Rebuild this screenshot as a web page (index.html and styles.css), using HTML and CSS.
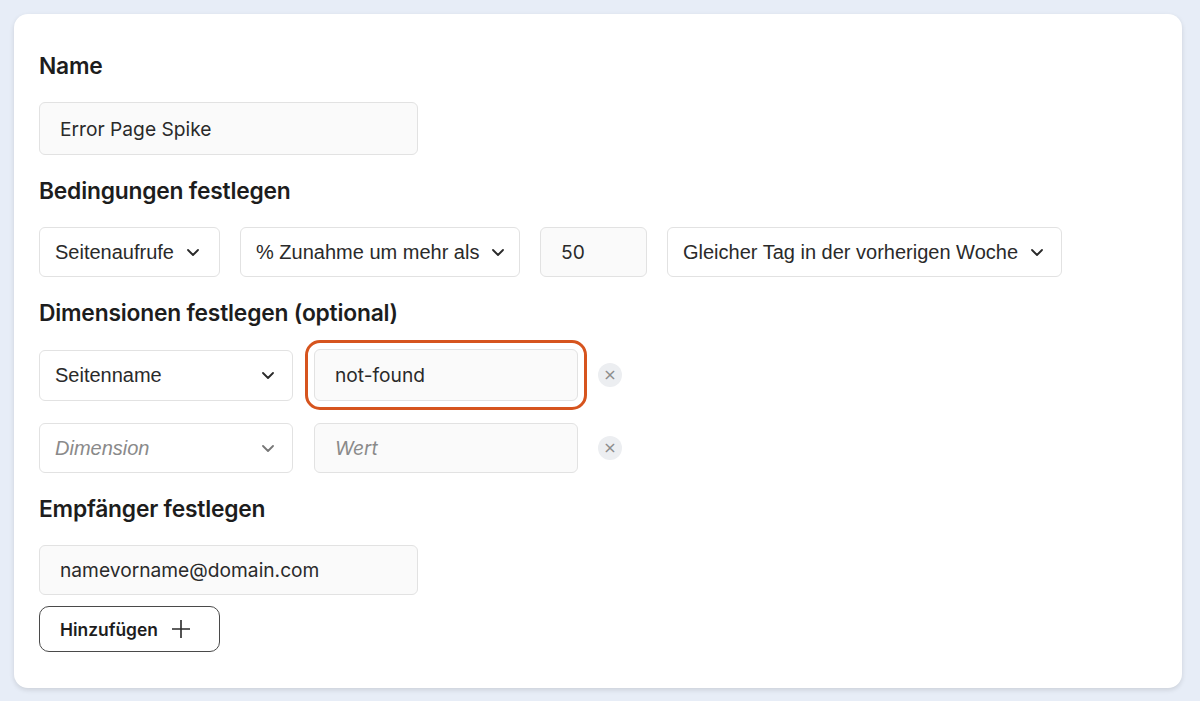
FILE: index.html
```html
<!DOCTYPE html>
<html>
<head>
  <meta charset="utf-8"/>
  <title>Alarm bearbeiten</title>
  <link rel="stylesheet" href="styles.css">
</head>
<body>
  <div class="card">
    <div class="section">
      <h2>Name</h2>
      <div class="field wide tall">Error Page Spike</div>
    </div>

    <div class="section">
      <h2>Bedingungen festlegen</h2>
      <div class="row">
        <div class="select w-metric">Seitenaufrufe <svg class="chev" viewBox="0 0 12 7"><path d="M1 1 L6 6 L11 1"/></svg></div>
        <div class="select w-op">% Zunahme um mehr als <svg class="chev" viewBox="0 0 12 7"><path d="M1 1 L6 6 L11 1"/></svg></div>
        <div class="field w-num">50</div>
        <div class="select w-period">Gleicher Tag in der vorherigen Woche <svg class="chev" viewBox="0 0 12 7"><path d="M1 1 L6 6 L11 1"/></svg></div>
      </div>
    </div>

    <div class="section">
      <h2>Dimensionen festlegen (optional)</h2>
      <div class="dims">
        <div class="row dim-row">
          <div class="select spread w-dim">Seitenname <svg class="chev" viewBox="0 0 12 7"><path d="M1 1 L6 6 L11 1"/></svg></div>
          <div class="field w-val active">not-found</div>
          <button class="remove">&times;</button>
        </div>
        <div class="row dim-row">
          <div class="select spread w-dim short placeholder">Dimension <svg class="chev" viewBox="0 0 12 7"><path d="M1 1 L6 6 L11 1"/></svg></div>
          <div class="field w-val short placeholder">Wert</div>
          <button class="remove">&times;</button>
        </div>
      </div>
    </div>

    <div class="section">
      <h2>Empfänger festlegen</h2>
      <div class="recipients">
        <div class="field wide">namevorname@domain.com</div>
        <button class="add">Hinzufügen <svg class="plus" viewBox="0 0 18 18"><path d="M9 0 V18 M0 9 H18"/></svg></button>
      </div>
    </div>
  </div>
</body>
</html>
```

FILE: styles.css
```css
body {
  margin: 0;
  background-color: #e7edf7;
  font-family: Inter, "Liberation Sans", sans-serif;
  color: #222;
}

.card {
  margin: 14px 18px 14px 14px;
  height: 674px;
  box-sizing: border-box;
  padding: 38px 25px;
  background-color: #fff;
  border-radius: 14px;
  box-shadow: 0 2px 5px rgba(0,0,0,0.12);
  display: flex;
  flex-direction: column;
  gap: 22px;
}

.section {
  display: flex;
  flex-direction: column;
  gap: 22px;
}

h2 {
  margin: 0;
  font-size: 22.8px;
  line-height: 28px;
  font-weight: 600;
  color: #1d1d1d;
  letter-spacing: -0.2px;
}

.row {
  display: flex;
  align-items: center;
  gap: 20px;
}

.field, .select {
  box-sizing: border-box;
  height: 50px;
  display: flex;
  align-items: center;
  border: 1px solid #e2e2e2;
  border-radius: 6px;
  color: #2a2a2a;
  white-space: nowrap;
  flex-shrink: 0;
}

.field {
  background-color: #fafafa;
  padding: 0 20px;
  font-size: 19.2px;
}

.select {
  background-color: #fff;
  padding: 0 15px;
  font-family: "Liberation Sans", Arial, sans-serif;
  font-size: 20px;
  gap: 13px;
}

.select.spread {
  justify-content: space-between;
  padding-right: 18px;
}

.chev {
  width: 12px;
  height: 7px;
  fill: none;
  stroke: #2a2a2a;
  stroke-width: 1.8;
  stroke-linecap: round;
  stroke-linejoin: round;
  flex-shrink: 0;
}

.wide { width: 379px; }
.tall { height: 53px; }
.w-metric { width: 181px; }
.w-op { width: 280px; }
.w-num { width: 107px; }
.w-period { width: 395px; }
.w-dim { width: 254px; height: 51px; }
.w-val { width: 264px; height: 52px; }
.short { height: 50px; }

.dims {
  display: flex;
  flex-direction: column;
  gap: 22px;
}

.dim-row { gap: 21px; }

.active {
  outline: 3px solid #d6541e;
  outline-offset: 6px;
}

.placeholder {
  font-style: italic;
  color: #8a8a8a;
}

.placeholder .chev {
  stroke: #777;
}

.remove {
  width: 24px;
  height: 24px;
  padding: 0;
  margin-left: -1px;
  border: none;
  border-radius: 50%;
  background-color: #eceef1;
  color: #8c8c8c;
  font-size: 16px;
  line-height: 24px;
  font-family: "DejaVu Sans", sans-serif;
  cursor: pointer;
}

.recipients {
  display: flex;
  flex-direction: column;
  align-items: flex-start;
  gap: 11px;
}

.add {
  box-sizing: border-box;
  width: 181px;
  height: 46px;
  padding: 0 20px;
  display: flex;
  align-items: center;
  gap: 14px;
  background: #fff;
  border: 1px solid #4a4a4a;
  border-radius: 10px;
  font-family: Inter, "Liberation Sans", sans-serif;
  font-size: 17.4px;
  font-weight: 600;
  color: #1d1d1d;
  cursor: pointer;
}

.plus {
  width: 18px;
  height: 18px;
  fill: none;
  stroke: #2a2a2a;
  stroke-width: 1.6;
}
```
